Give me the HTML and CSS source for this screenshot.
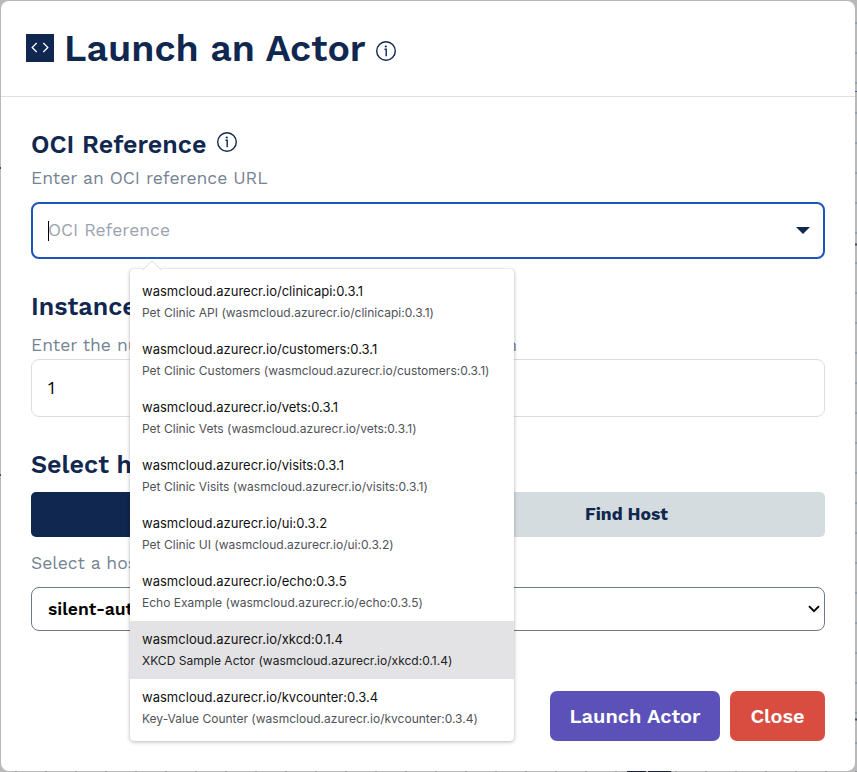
FILE: index.html
```html
<!DOCTYPE html>
<html lang="en">
<head>
<meta charset="utf-8">
<title>Launch an Actor</title>
<link rel="stylesheet" href="styles.css">
</head>
<body>
<svg class="backdrop" width="857" height="772" aria-hidden="true">
  <defs>
    <pattern id="ticks-y" width="2" height="30" y="22" x="855" patternUnits="userSpaceOnUse"><rect width="2" height="2" fill="#8ba2b2"/></pattern>
    <pattern id="ticks-x" width="30" height="1" x="15" y="771" patternUnits="userSpaceOnUse"><rect width="2" height="1" fill="#9c9c9e"/></pattern>
  </defs>
  <rect x="855" width="2" height="772" fill="url(#ticks-y)"/>
  <rect y="771" width="857" height="1" fill="url(#ticks-x)"/>
  <path d="M855 91.5h2" stroke="#3f60a0"/>
  <path d="M855 244.5h2M855 719.500h2M0 168h1M0 475h1" stroke="#444b5c" stroke-width="2"/>
  <path d="M627 771.500h19M648 771.500h23" stroke="#14233f"/>
</svg>
<main class="modal">
  <header class="modal-header">
    <svg class="code-icon" viewBox="0 0 28 28"><rect width="28" height="28" fill="#10274f"/><path d="M10.700 9l-4.500 4.500 4.500 4.500M17.300 9l4.500 4.500-4.500 4.500" fill="none" stroke="#fff" stroke-width="1.300"/></svg>
    <h1>Launch an Actor</h1>
    <svg class="info info-title" viewBox="0 0 20 20"><circle cx="10" cy="10" r="9.300"/><path d="M8.500 8.200H10.200V15.200"/><circle class="dot" cx="9.800" cy="5.500" r="1.100"/></svg>
  </header>
  <form class="modal-body">
    <h2>OCI Reference<svg class="info" viewBox="0 0 20 20"><circle cx="10" cy="10" r="9.300"/><path d="M8.500 8.200H10.200V15.200"/><circle class="dot" cx="9.800" cy="5.500" r="1.100"/></svg></h2>
    <p class="hint">Enter an OCI reference URL</p>
    <div class="field combo">
      <span class="caret"></span><span class="placeholder">OCI Reference</span>
      <svg class="combo-arrow" viewBox="0 0 14 7"><path d="M0 0h14L7 7z" fill="#10274f"/></svg>
      <div class="suggestions">
        <svg class="notch" viewBox="0 0 18 9"><path d="M0 9L8 .8Q9 0 10 .8L18 9" fill="#fff" stroke="#dedede"/></svg>
        <div class="option"><b>wasmcloud.azurecr.io/clinicapi:0.3.1</b><small>Pet Clinic API (wasmcloud.azurecr.io/clinicapi:0.3.1)</small></div>
        <div class="option"><b>wasmcloud.azurecr.io/customers:0.3.1</b><small>Pet Clinic Customers (wasmcloud.azurecr.io/customers:0.3.1)</small></div>
        <div class="option"><b>wasmcloud.azurecr.io/vets:0.3.1</b><small>Pet Clinic Vets (wasmcloud.azurecr.io/vets:0.3.1)</small></div>
        <div class="option"><b>wasmcloud.azurecr.io/visits:0.3.1</b><small>Pet Clinic Visits (wasmcloud.azurecr.io/visits:0.3.1)</small></div>
        <div class="option"><b>wasmcloud.azurecr.io/ui:0.3.2</b><small>Pet Clinic UI (wasmcloud.azurecr.io/ui:0.3.2)</small></div>
        <div class="option"><b>wasmcloud.azurecr.io/echo:0.3.5</b><small>Echo Example (wasmcloud.azurecr.io/echo:0.3.5)</small></div>
        <div class="option active"><b>wasmcloud.azurecr.io/xkcd:0.1.4</b><small>XKCD Sample Actor (wasmcloud.azurecr.io/xkcd:0.1.4)</small></div>
        <div class="option"><b>wasmcloud.azurecr.io/kvcounter:0.3.4</b><small>Key-Value Counter (wasmcloud.azurecr.io/kvcounter:0.3.4)</small></div>
      </div>
    </div>
    <h2 class="h-instances">Instances</h2>
    <p class="hint hint-tight"><span>Enter the number of instances of this</span><span>actor to be run</span></p>
    <div class="field number">1</div>
    <h2 class="h-host">Select host</h2>
    <div class="tabs"><div class="tab selected">Select Host</div><div class="tab">Find Host</div></div>
    <p class="hint hint-host">Select a host</p>
    <div class="field select"><span>silent-autumn</span>
      <svg class="chevron" viewBox="0 0 12 8"><path d="M1 1.200l5 5 5-5" fill="none" stroke="#000" stroke-width="1.900"/></svg>
    </div>
    <div class="actions"><button type="button" class="btn launch">Launch Actor</button><button type="button" class="btn close">Close</button></div>
  </form>
</main>
</body>
</html>
```
FILE: styles.css
```css
* { box-sizing: border-box; }
body {
  margin: 0;
  padding: 1px 2px 1px 1px;
  height: 772px;
  overflow: hidden;
  background: #b9b9b9;
  color: #10274f;
  font-family: "Work Sans", Inter, sans-serif;
}
svg { display: block; flex: none; }
.backdrop { position: absolute; left: 0; top: 0; }
.modal {
  position: relative;
  height: 770px;
  background: #fff;
  border-radius: 8px;
}
.modal-header {
  display: flex;
  align-items: center;
  height: 96px;
  padding-left: 25px;
  border-bottom: 1px solid #dfe0e8;
}
.code-icon { width: 28px; height: 28px; margin-top: -1px; }
h1 {
  width: 311.5px;
  margin: -2px 0 0 10px;
  font-size: 37.5px;
  line-height: 50px;
  font-weight: 600;
  white-space: nowrap;
}
.info { width: 20px; height: 20px; fill: none; stroke: #10274f; stroke-width: 1.4; }
.info .dot { fill: #10274f; stroke: none; }
.info-title { margin-top: 5px; }
.modal-body { padding: 30px; }
h2 {
  display: flex;
  margin: 0 0 2px;
  font-size: 25px;
  line-height: 36px;
  font-weight: 600;
}
h2 .info { margin: 5px 0 0 11px; }
.hint {
  margin: 0 0 11px;
  font-size: 17.5px;
  line-height: 26px;
  font-weight: 400;
  color: #748394;
  white-space: nowrap;
}
.field {
  display: flex;
  align-items: center;
  border-radius: 8px;
  background: #fff;
}
.combo {
  position: relative;
  height: 57px;
  padding: 0 13px 0 15px;
  border: 2px solid #1d55bd;
}
.caret { width: 1px; height: 20px; margin-right: -1px; background: #000; }
.placeholder {
  margin-top: -2px;
  font-size: 17.5px;
  font-weight: 400;
  color: #9ca3af;
}
.combo-arrow { width: 14px; height: 7px; margin-left: auto; }
.suggestions {
  position: absolute;
  z-index: 2;
  left: 97px;
  top: 65px;
  width: 384px;
  height: 472px;
  padding: 4px 0;
  border-radius: 4px;
  background: #fff;
  box-shadow: 0 0 1px #0003, 0 1px 4px #0004;
}
.notch { position: absolute; left: 13px; top: -8px; width: 18px; height: 9px; }
.option {
  height: 58px;
  padding: 8px 12px 0;
  color: #202124;
  font-family: Inter, sans-serif;
  white-space: nowrap;
}
.option b, .option small { display: block; font-weight: 400; line-height: 21px; }
.option b { font-size: 13px; letter-spacing: .02px; color: #111; }
.option small { font-size: 12px; letter-spacing: .01px; color: #505258; }
.option.active { background: #e3e3e5; }
.option.active small { color: #202124; }
.h-instances { margin: 30px 0 7px; }
.hint-tight {
  display: flex;
  justify-content: space-between;
  width: 486px;
  margin-bottom: 1px;
}
.number {
  height: 58px;
  padding-left: 16px;
  border: 1px solid #dcdde4;
  color: #000;
  font-size: 17.5px;
}
.h-host { margin: 30px 0 9px; }
.tabs { display: flex; height: 45px; border-radius: 5px; overflow: hidden; }
.tab {
  flex: 1;
  background: #d5dcdf;
  font-size: 17.5px;
  line-height: 44px;
  font-weight: 700;
  text-align: center;
}
.tab.selected { background: #10274f; color: #fff; }
.hint-host { margin-top: 13px; }
.select {
  height: 44px;
  padding: 0 4px 0 16px;
  border: 1px solid #6b7a8b;
  color: #000;
  font-size: 17.5px;
  font-weight: 600;
}
.chevron { width: 12px; height: 8px; margin-left: auto; }
.actions { display: flex; justify-content: flex-end; gap: 10px; margin-top: 60px; }
.btn {
  height: 50px;
  padding: 0;
  border: 0;
  border-radius: 7px;
  color: #fff;
  font: 600 20px/50px "Work Sans", Inter, sans-serif;
}
.launch { width: 170px; background: #5b51b9; }
.close { width: 95px; background: #d94c40; }
```
